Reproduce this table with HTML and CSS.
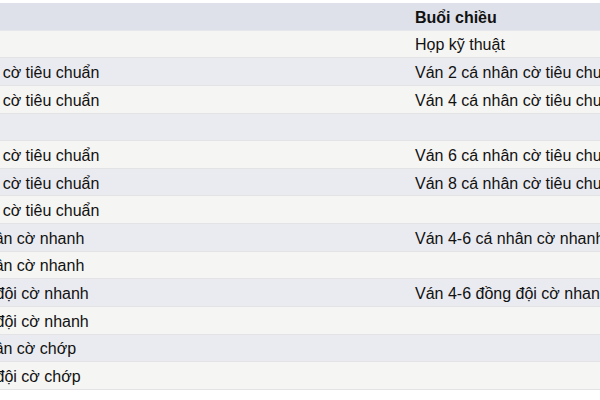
FILE: index.html
```html
<!DOCTYPE html>
<html lang="vi">
<head>
<meta charset="utf-8">
<link rel="stylesheet" href="styles.css">
</head>
<body>
<div class="wrap">
<table class="schedule">
  <thead>
    <tr><th class="am">Buổi sáng</th><th class="pm">Buổi chiều</th></tr>
  </thead>
  <tbody>
    <tr><td></td><td>Họp kỹ thuật</td></tr>
    <tr><td>Ván 1 cá nhân cờ tiêu chuẩn</td><td>Ván 2 cá nhân cờ tiêu chuẩn</td></tr>
    <tr><td>Ván 3 cá nhân cờ tiêu chuẩn</td><td>Ván 4 cá nhân cờ tiêu chuẩn</td></tr>
    <tr><td></td><td></td></tr>
    <tr><td>Ván 5 cá nhân cờ tiêu chuẩn</td><td>Ván 6 cá nhân cờ tiêu chuẩn</td></tr>
    <tr><td>Ván 7 cá nhân cờ tiêu chuẩn</td><td>Ván 8 cá nhân cờ tiêu chuẩn</td></tr>
    <tr><td>Ván 9 cá nhân cờ tiêu chuẩn</td><td></td></tr>
    <tr><td>Ván 1-3 cá nhân cờ nhanh</td><td>Ván 4-6 cá nhân cờ nhanh</td></tr>
    <tr><td>Ván 7-9 cá nhân cờ nhanh</td><td></td></tr>
    <tr><td>Ván 1-3 đồng đội cờ nhanh</td><td>Ván 4-6 đồng đội cờ nhanh</td></tr>
    <tr><td>Ván 7-9 đồng đội cờ nhanh</td><td></td></tr>
    <tr><td>Ván 1-9 cá nhân cờ chớp</td><td></td></tr>
    <tr><td>Ván 1-9 đồng đội cờ chớp</td><td></td></tr>
  </tbody>
</table>
</div>
</body>
</html>
```

FILE: styles.css
```css
html, body {
  margin: 0;
  padding: 0;
  background: #ffffff;
  overflow: hidden;
}
.wrap {
  width: 600px;
  height: 400px;
  overflow: hidden;
  padding-top: 3px;
  box-sizing: border-box;
}
.schedule {
  border-collapse: collapse;
  margin-left: -113px;
  width: 900px;
  table-layout: fixed;
  font-family: "Liberation Sans", Arial, sans-serif;
  font-size: 16px;
  color: #111111;
}
.schedule th,
.schedule td {
  text-align: left;
  white-space: nowrap;
  overflow: hidden;
  padding: 3px 8px 0;
  height: 23.64px;
  line-height: 18px;
  border-bottom: 1px solid #e3e3e6;
  vertical-align: middle;
}
.schedule .am { width: 504px; }
.schedule th {
  font-weight: bold;
  background: #dee1e9;
  border-bottom: 1px solid #e6e7ec;
}
.schedule tbody tr:nth-child(odd) td { background: #f5f5f3; }
.schedule tbody tr:nth-child(even) td { background: #eaebf0; }
```
